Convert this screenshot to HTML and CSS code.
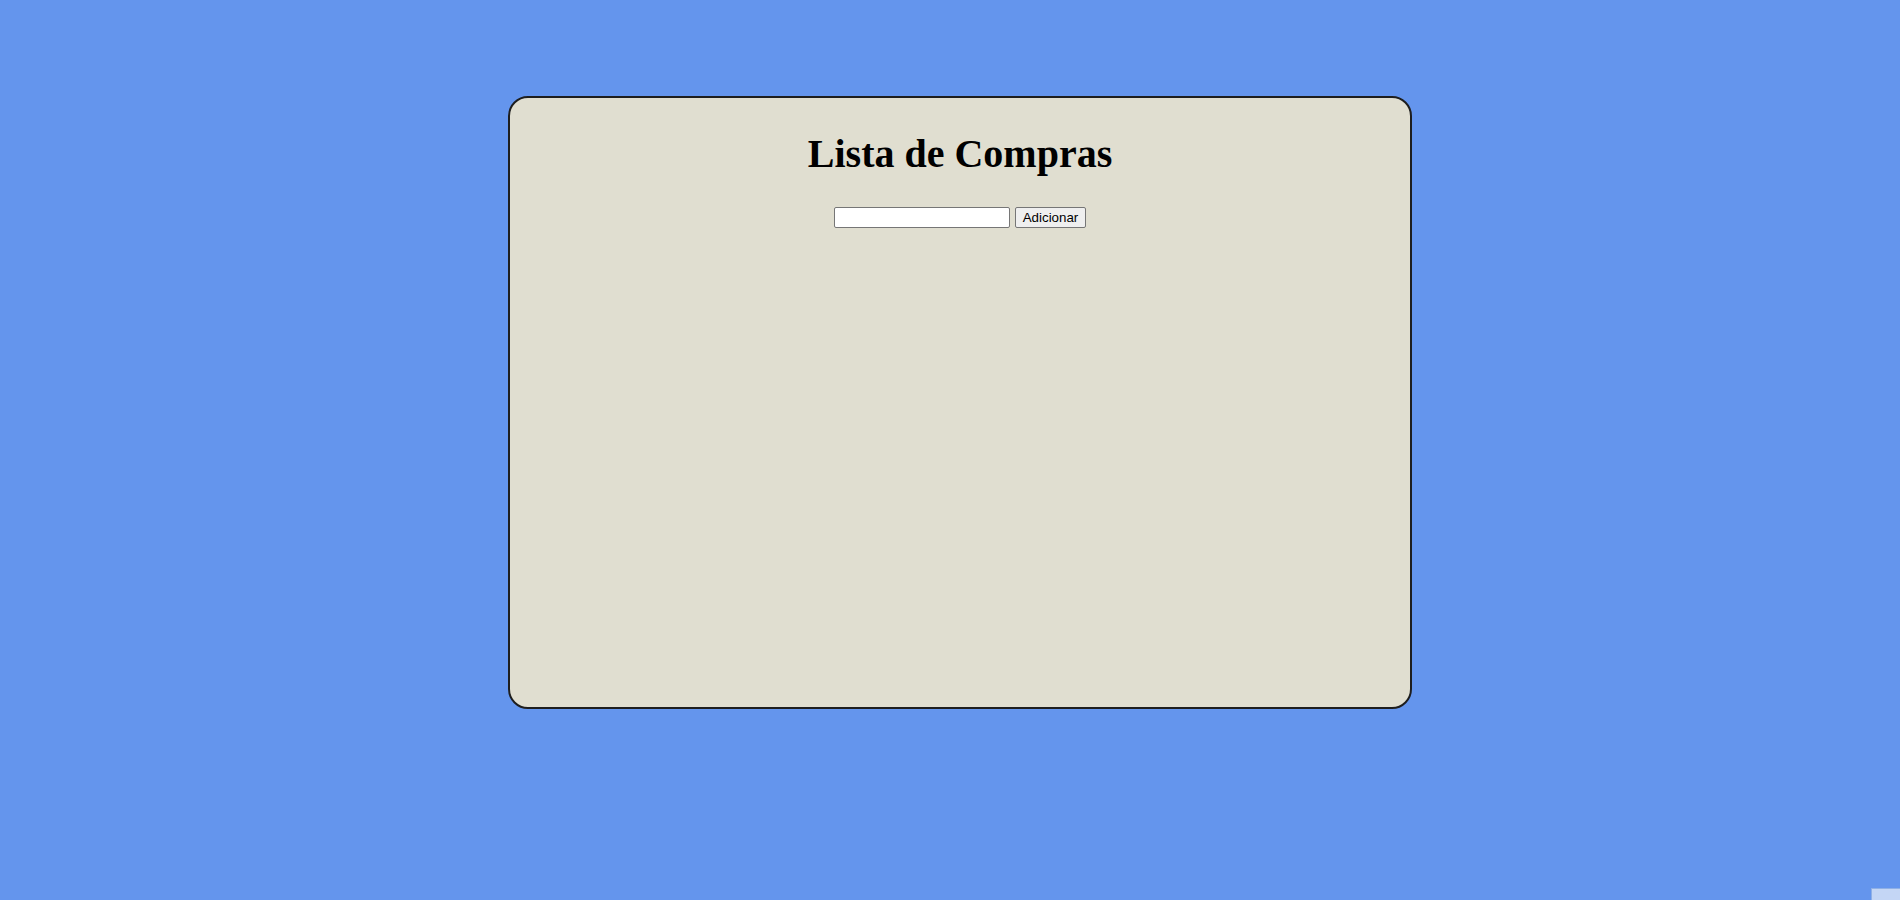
FILE: index.html
```html
<!DOCTYPE html>
<html lang="pt">
<head>
<meta charset="utf-8">
<title>Lista de Compras</title>
<link rel="stylesheet" href="styles.css">
</head>
<body>
<main class="card">
  <h1 class="title">Lista de Compras</h1>
  <form class="add-form">
    <input class="item-input" type="text">
    <button class="add-btn" type="button">Adicionar</button>
  </form>
  <ul class="list"></ul>
</main>
<div class="corner"></div>
</body>
</html>
```
FILE: styles.css
```css
html, body {
  margin: 0;
  height: 100%;
}
body {
  background: #6495ed;
  padding: 96px 0 0 508px;
  box-sizing: border-box;
  font-family: "Liberation Serif", "Times New Roman", serif;
  overflow: hidden;
}
.card {
  width: 900px;
  height: 609px;
  background: #e0ded0;
  border: 2px solid #1e1e1e;
  border-radius: 20px;
  display: flex;
  flex-direction: column;
  align-items: center;
}
.title {
  font-size: 40px;
  font-weight: bold;
  margin: 33px 0 0;
  line-height: 46px;
}
.add-form {
  margin-top: 30px;
  display: flex;
  gap: 5px;
  align-items: center;
}
.item-input {
  width: 176px;
  height: 21px;
  box-sizing: border-box;
  border: 1px solid #767676;
  border-radius: 2px;
  background: #fff;
  padding: 1px 2px;
  font-family: "Liberation Sans", Arial, sans-serif;
  font-size: 13.33px;
}
.add-btn {
  height: 21px;
  width: 71px;
  box-sizing: border-box;
  border: 1px solid #767676;
  border-radius: 2px;
  background: #efefef;
  font-family: "Liberation Sans", Arial, sans-serif;
  font-size: 13.33px;
  color: #000;
  padding: 0 6px;
}
.list {
  margin: 0;
  padding: 0;
}
.corner {
  position: fixed;
  right: 0;
  bottom: 0;
  width: 28px;
  height: 11px;
  background: #c4d6f5;
  border-top: 1px solid #8fb0e6;
  border-left: 1px solid #8fb0e6;
}
```
